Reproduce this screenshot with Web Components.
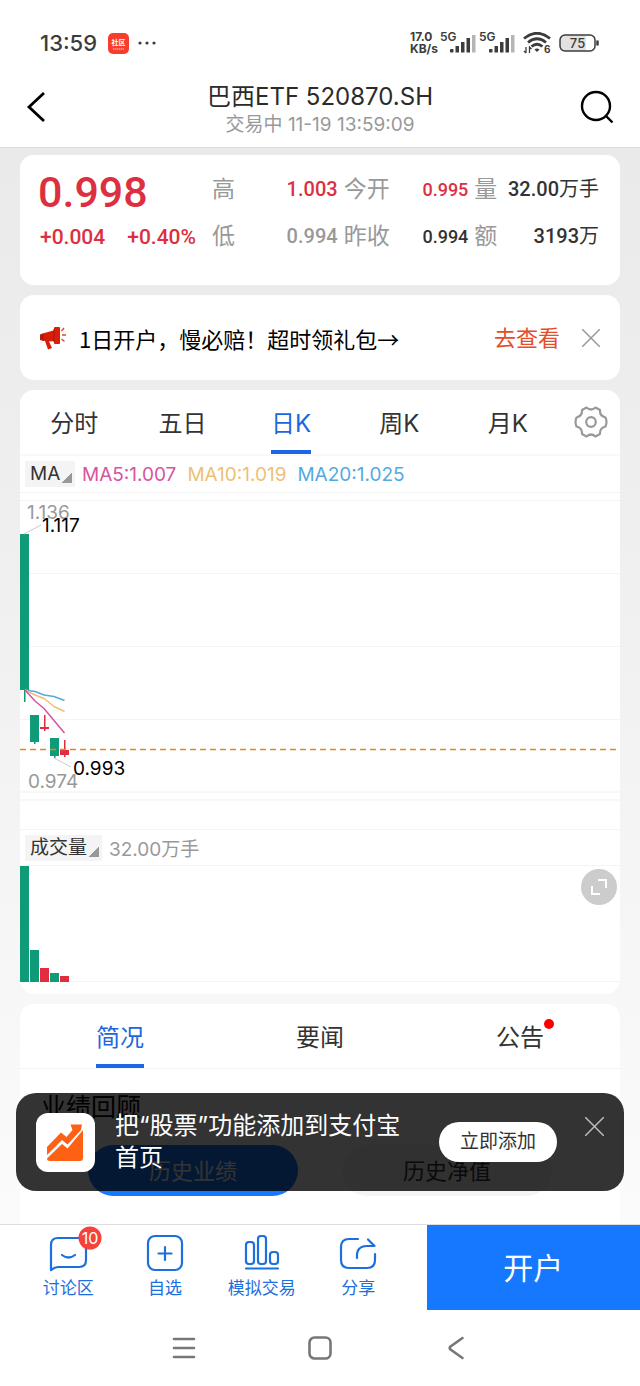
<!DOCTYPE html>
<html lang="zh-CN">
<head>
<meta charset="utf-8">
<meta name="viewport" content="width=device-width, initial-scale=1">
<title>巴西ETF 520870.SH</title>
<style>
  html, body { margin: 0; }
  body {
    font-family: Inter, "Noto Sans CJK SC", sans-serif;
    color: #333;
    --num: Roboto, "Noto Sans CJK SC", sans-serif;
    --up: #dc3040;
    --down: #0f9a78;
    --blue: #1c66e0;
    --line: #f4f4f4;
  }
</style>
</head>
<body>
<stock-app></stock-app>

<script>
const define = (name, css, html) => {
  const tpl = document.createElement('template');
  tpl.innerHTML = `<style>
    *, *::before, *::after { box-sizing: border-box; }
    button { font: inherit; color: inherit; background: none; border: 0; padding: 0; margin: 0; cursor: pointer; }
    svg { display: block; }
    ${css}</style>${html}`;
  customElements.define(name, class extends HTMLElement {
    constructor() {
      super();
      this.attachShadow({ mode: 'open' }).append(tpl.content.cloneNode(true));
    }
  });
};

define('status-bar', `
  :host { display: flex; box-sizing: border-box; align-items: center; height: 66px; padding: 20px 40px 0; font-weight: 500; color: #3c3c3c; }
  .time { font-size: 22px; margin-right: 11px; }
  .app { margin-right: 9px; }
  .sys { margin-left: auto; display: flex; align-items: center; gap: 2px; }
  .speed { font-size: 12px; line-height: 12px; font-weight: 700; }
  .wifi { margin: 0 6px 0 5px; }
`, `
  <span class="time">13:59</span>
  <svg class="app" width="21" height="21" viewBox="0 0 21 21" role="img" aria-label="社区">
    <rect width="21" height="21" rx="5" fill="#f93d2c"/>
    <text x="10.500" y="12" text-anchor="middle" font-size="7" font-weight="700" fill="#fff">社区</text>
    <path d="M5 16h11" stroke="#fff" stroke-width="1" stroke-dasharray="1.500 .5" opacity=".8"/>
  </svg>
  <svg width="18" height="4" viewBox="0 0 18 4" fill="#3c3c3c" aria-hidden="true"><circle cx="2" cy="2" r="1.600"/><circle cx="9" cy="2" r="1.600"/><circle cx="16" cy="2" r="1.600"/></svg>
  <div class="sys">
    <div class="speed">17.0<br>KB/s</div>
    <signal-bars></signal-bars>
    <signal-bars></signal-bars>
    <svg class="wifi" width="28" height="22" viewBox="0 0 28 22" fill="none" stroke="#3c3c3c" stroke-width="2.800">
      <path d="M1 6.500Q14-4 27 6.500M5 10.500Q14 3 23 10.500M8.500 14.500Q14 10 19.500 14.500"/>
      <path d="M11.500 17.500Q14 15.500 16.500 17.500L14 20z" fill="#3c3c3c" stroke="none"/>
      <path d="M3 15v6M1 19l2 2M6.500 21v-6l2 2" stroke-width="1.300"/>
      <text x="21" y="21" font-size="10" font-weight="700" fill="#3c3c3c" stroke="none">6</text>
    </svg>
    <svg width="41" height="18" viewBox="0 0 41 18">
      <path d="M5 1H27V17H5Q1 17 1 13V5Q1 1 5 1z" fill="#e2e2e2"/>
      <rect x="1" y="1" width="35" height="16" rx="5" fill="none" stroke="#3c3c3c" stroke-width="1.500"/>
      <path d="M38.500 6.500v5" stroke="#3c3c3c" stroke-width="2.500"/>
      <text x="18.500" y="13.500" text-anchor="middle" font-size="13" font-weight="500" fill="#3c3c3c">75</text>
    </svg>
  </div>
`);

define('signal-bars', `:host { display: block; }`, `
  <svg width="37" height="22" viewBox="0 0 37 22" fill="#3c3c3c">
    <text x="0" y="9" font-size="12" font-weight="600">5G</text>
    <rect x="10" y="17" width="3.500" height="3.500" rx=".8"/><rect x="15.500" y="14" width="3.500" height="6.500"/>
    <rect x="21" y="10" width="3.500" height="10.500"/><rect x="26.500" y="6" width="3.500" height="14.500"/>
    <rect x="32" y="3" width="3.500" height="17.500" fill="#b5b5b5"/>
  </svg>
`);

define('title-bar', `
  :host { display: flex; box-sizing: border-box; align-items: center; justify-content: space-between; height: 82px; padding: 0 26px; border-bottom: 1px solid #dedede; }
  .mid { text-align: center; padding-top: 6px; }
  h1 { margin: 0; font-size: 24px; line-height: 30px; font-weight: 400; color: #2b2b2b; }
  p { margin: 0; font-size: 19px; line-height: 26px; color: #999; }
`, `
  <button aria-label="返回"><svg width="34" height="32" viewBox="0 0 34 32" fill="none" stroke="#000" stroke-width="2.800"><path d="M18 2L3 16 18 30"/></svg></button>
  <div class="mid"><h1><slot></slot></h1><p><slot name="sub"></slot></p></div>
  <button aria-label="搜索"><svg width="34" height="34" viewBox="0 0 34 34" fill="none" stroke="#000" stroke-width="2.400"><circle cx="16" cy="16" r="14"/><path d="M26 26l6.500 6.500"/></svg></button>
`);

define('quote-card', `
  :host { display: grid; box-sizing: border-box; grid-template-columns: 174px minmax(0, 1fr); height: 130px; padding: 11px 21px 0 18px; border-radius: 14px; background: #fff; font-family: var(--num); }
  .price { font-size: 43px; line-height: 52px; font-weight: 500; color: var(--up); }
  .chg { display: flex; gap: 22px; padding-left: 2px; font-size: 21px; line-height: 38px; font-weight: 500; color: var(--up); }
  dl { margin: 0; display: grid; grid-template-columns: 23px 97fr 46px 73fr 23px 96fr; grid-auto-rows: 47px; column-gap: 6px; line-height: 47px; }
  dt { font-size: 23px; color: #999; }
  dd { margin: 0; font-size: 20px; font-weight: 500; text-align: right; white-space: nowrap; }
  dd span { font-weight: 400; }
  .s { font-size: 18px; } .up { color: var(--up); } .flat { color: #999; }
`, `
  <div><div class="price">0.998</div><div class="chg"><span>+0.004</span><span>+0.40%</span></div></div>
  <dl>
    <dt>高</dt><dd class="up">1.003</dd><dt>今开</dt><dd class="s up">0.995</dd><dt>量</dt><dd>32.00<span>万手</span></dd>
    <dt>低</dt><dd class="flat">0.994</dd><dt>昨收</dt><dd class="s">0.994</dd><dt>额</dt><dd>3193<span>万</span></dd>
  </dl>
`);

define('promo-card', `
  :host { display: flex; box-sizing: border-box; align-items: center; height: 85px; padding: 0 20px; border-radius: 14px; background: #fff; font-size: 22px; line-height: 32px; }
  p { margin: 0 auto 0 13px; color: #000; font-family: "Noto Sans CJK SC", sans-serif; }
  a { color: #e34d2b; text-decoration: none; margin-right: 22px; }
`, `
  <svg width="26" height="26" viewBox="0 0 26 26" aria-hidden="true">
    <path d="M1 9L15 5V16L9 16.500 12 23 8 24.500 5 16 1 15z" fill="#d81e06"/><path d="M0 9.500L4 8.500V16L0 15z" fill="#b31d0a"/>
    <rect x="14" y="2" width="6" height="17" rx="1" fill="#d81e06"/><path d="M14 4v13" stroke="#9f1a0a"/>
    <path d="M21.500 6L24 3M22 10h4M21.500 14l3 2.500" stroke="#d84a35" stroke-width="1.400"/>
  </svg>
  <p><slot></slot></p>
  <a href="#open">去查看</a>
  <button aria-label="关闭"><svg width="18" height="18" viewBox="0 0 18 18" stroke="#999" stroke-width="1.500"><path d="M0 0L18 18M18 0L0 18"/></svg></button>
`);

define('tab-item', `
  :host { display: flex; flex: 1; justify-content: center; font-size: 24px; }
  button { position: relative; height: 100%; padding-top: 3px; border-bottom: 4px solid transparent; }
  :host([active]) button { color: var(--blue); border-color: #1c66e8; }
  i { display: none; position: absolute; top: 15px; right: -10px; width: 10px; height: 10px; border-radius: 50%; background: #f00; }
  :host([dot]) i { display: block; }
`, `<button role="tab"><slot></slot><i></i></button>`);

define('kline-card', `
  :host { display: block; border-radius: 14px; background: #fff; overflow: hidden; }
  .tabs { display: flex; height: 66px; border-bottom: 2px solid #f8f8f8; }
  .set { width: 58px; display: grid; place-items: center; }
  .row { display: flex; align-items: center; height: 37px; padding-left: 5px; gap: 11px; border-bottom: 1px solid var(--line); font-size: 19px; white-space: nowrap; }
  .row.vol { border-top: 1px solid var(--line); gap: 7px; }
  .row select + span { margin-left: -4px; }
  .row.vol select + span { margin-left: 0; }
  select { appearance: none; border: 0; border-radius: 0; margin: 0; height: 26px; padding: 0 14px 0 5px; font: inherit; line-height: 26px; color: #333;
    background: linear-gradient(135deg, transparent 49%, #999 50%) no-repeat right 3px bottom 4px / 10px 10px #f4f4f4; }
  .m5 { color: #d9539f; } .m10 { color: #efbf74; } .m20 { color: #54aae0; } .v { color: #999; }
  svg { width: 100%; }
  .set svg { width: 34px; }
  .volume { position: relative; }
  .zoom { position: absolute; top: 3px; right: 3px; width: 36px; height: 36px; border-radius: 50%; background: #ccc; display: grid; place-items: center; }
  .zoom svg { width: 18px; }
`, `
  <div class="tabs" role="tablist">
    <tab-item>分时</tab-item><tab-item>五日</tab-item><tab-item active>日K</tab-item><tab-item>周K</tab-item><tab-item>月K</tab-item>
    <button class="set" aria-label="设置"><svg height="34" viewBox="0 0 34 34" fill="none" stroke="#999" stroke-width="2.200" stroke-linejoin="round">
      <path d="M12.500 2.500Q17 6.500 21.500 2.500L26 5Q25.500 11 31.500 12.500Q33.500 17 31.500 21.500Q25.500 23 26 29L21.500 31.500Q17 27.500 12.500 31.500L8 29Q8.500 23 2.500 21.500Q.5 17 2.500 12.500Q8.500 11 8 5z"/><circle cx="17" cy="17" r="4.800"/></svg></button>
  </div>
  <div class="row"><select aria-label="主图指标"><option>MA</option></select><span class="m5">MA5:1.007</span><span class="m10">MA10:1.019</span><span class="m20">MA20:1.025</span></div>
  <svg height="336" role="img" aria-label="日K线图" font-size="19">
    <g fill="#f4f4f4"><rect y="7" width="100%" height="1"/><rect y="80" width="100%" height="1"/><rect y="153" width="100%" height="1"/><rect y="226" width="100%" height="1"/></g>
    <g fill="#f8f8f8"><rect y="298" width="100%" height="2"/><rect y="306" width="100%" height="2"/></g>
    <g fill="#0f9a78"><rect y="41" width="9" height="156"/><rect x="4" y="196" width="1.500" height="13"/><rect x="10" y="222" width="9" height="27"/><rect x="14" y="249" width="1.500" height="2"/><rect x="30" y="245" width="9" height="18"/><rect x="34" y="263" width="1.500" height="2"/></g>
    <g fill="#e12d3f"><rect x="24" y="222" width="1.500" height="16"/><rect x="20" y="234" width="9" height="2"/><rect x="44" y="247" width="1.500" height="17"/><rect x="40" y="257" width="9" height="5"/></g>
    <g fill="none" stroke-width="1.500" stroke-linejoin="round"><path d="M5 197l10 1.500 9 3.500 10 1.500 10.500 4" stroke="#54aae0"/><path d="M5 197l10 5 9 3.500 10 8 10.500 5" stroke="#efbf74"/><path d="M5 197l10 11 9 7.500 10 12 10.500 12.500" stroke="#d9539f"/></g>
    <path d="M4 41l17-9M34 265l17 9" stroke="#ccc"/>
    <line y1="256.500" x2="100%" y2="256.500" stroke="#de8a22" stroke-width="1.500" stroke-dasharray="6 4"/>
    <g fill="#999"><text x="7" y="26">1.136</text><text x="8" y="295">0.974</text></g>
    <g fill="#000"><text x="22" y="39">1.117</text><text x="53" y="282">0.993</text></g>
  </svg>
  <div class="row vol"><select aria-label="副图指标"><option>成交量</option></select><span class="v">32.00万手</span></div>
  <div class="volume">
    <svg height="128" role="img" aria-label="成交量图"><rect y="115" width="100%" height="1" fill="#f4f4f4"/>
      <g fill="#0f9a78"><rect width="9" height="116"/><rect x="10" y="84" width="9" height="32"/><rect x="30" y="107" width="9" height="9"/></g>
      <g fill="#e12d3f"><rect x="20" y="102" width="9" height="14"/><rect x="40" y="110" width="9" height="6"/></g></svg>
    <button class="zoom" aria-label="全屏"><svg height="18" viewBox="0 0 18 18" fill="none" stroke="#fff" stroke-width="2"><path d="M8 2h8v8M2 8v8h8"/></svg></button>
  </div>
`);

define('info-card', `
  :host { display: block; flex: 1; border-radius: 14px 14px 0 0; background: #fff; }
  .tabs { display: flex; height: 65px; border-bottom: 1px solid var(--line); }
  h2 { margin: 18px 21px; font-size: 25px; line-height: 40px; font-weight: 400; color: #000; }
  .seg { display: flex; justify-content: center; gap: 44px; }
  .seg button { width: 210px; height: 51px; padding-bottom: 3px; border-radius: 26px; font-size: 22px; background: #f4f4f4; }
  .seg .on { background: #1677ff; color: #fff; }
`, `
  <div class="tabs" role="tablist"><tab-item active>简况</tab-item><tab-item>要闻</tab-item><tab-item dot>公告</tab-item></div>
  <h2>业绩回顾</h2>
  <div class="seg"><button class="on">历史业绩</button><button>历史净值</button></div>
`);

define('add-toast', `
  :host { display: flex; box-sizing: border-box; align-items: center; height: 98px; padding: 0 20px; border-radius: 20px; background: rgba(0,0,0,.8); color: #fff; }
  .logo { flex: none; margin-right: 20px; }
  p { flex: 1; margin: 0 24px 0 0; font-size: 24px; line-height: 32px; }
  .add { flex: none; width: 118px; height: 40px; border-radius: 20px; background: #fff; color: #333; font-size: 19px; line-height: 40px; }
  .x { flex: none; align-self: flex-start; margin: 24px 0 0 28px; }
`, `
  <svg class="logo" width="59" height="59" viewBox="0 0 59 59" aria-hidden="true">
    <rect width="59" height="59" rx="12" fill="#fff"/>
    <path d="M11 34L25 19.500l5.500 4.500 6-7-2-5.500H46L45 17 31.500 31.500 26 27 11 42z" fill="#fe6114"/>
    <path d="M11 45.500L26 31l5.500 4.500L47 17V45q0 3-3 3H14q-3 0-3-2.500z" fill="#fe6114"/>
  </svg>
  <p><slot></slot></p>
  <button class="add">立即添加</button>
  <button class="x" aria-label="关闭"><svg width="19" height="19" viewBox="0 0 19 19" stroke="#bbb" stroke-width="1.500"><path d="M0 0L19 19M19 0L0 19"/></svg></button>
`);

define('tool-item', `
  :host { display: flex; flex: 1; justify-content: center; color: #1c6fdc; }
  a { position: relative; display: flex; flex-direction: column; align-items: center; padding-top: 8px; gap: 3px; color: inherit; text-decoration: none; font-size: 17px; line-height: 24px; white-space: nowrap; }
  ::slotted(svg) { display: block; }
`, `<a href="#tool"><slot name="icon"></slot><slot></slot></a>`);

define('bottom-bar', `
  :host { display: grid; box-sizing: border-box; grid-template-columns: 2fr 1fr; height: 86px; border-top: 1px solid #dedede; background: #fff; }
  nav { display: flex; padding: 0 20px; }
  .cta { background: #1677ff; color: #fff; font-size: 30px; padding-bottom: 4px; }
  tool-item svg { fill: none; stroke: #1c6fdc; stroke-width: 2.200; stroke-linecap: round; stroke-linejoin: round; overflow: visible; }
`, `
  <nav>
    <tool-item><svg slot="icon" width="40" height="40" viewBox="0 0 40 40">
      <path d="M3 37V12q0-7 7-7h21q7 0 7 7v15q0 7-7 7H10q-3 0-7 3z"/><path d="M14 22q6.500 5 13 0"/>
      <circle cx="42" cy="5" r="11.500" fill="#f5423a" stroke="none"/><text x="42" y="11" text-anchor="middle" font-size="16" fill="#fff" stroke="none">10</text></svg>讨论区</tool-item>
    <tool-item><svg slot="icon" width="40" height="40" viewBox="0 0 40 40"><rect x="3" y="3" width="34" height="34" rx="7"/><path d="M20 14v13M13.500 20.500h13"/></svg>自选</tool-item>
    <tool-item><svg slot="icon" width="40" height="40" viewBox="0 0 40 40"><rect x="4" y="9" width="8" height="22" rx="3"/><rect x="16" y="3" width="8" height="28" rx="3"/><rect x="28" y="19" width="8" height="12" rx="3"/><path d="M4 35.500h32"/></svg>模拟交易</tool-item>
    <tool-item><svg slot="icon" width="40" height="40" viewBox="0 0 40 40"><path d="M20 6H11q-8 0-8 8v13q0 8 8 8h18q8 0 8-8v-6"/><path d="M19 25q-1-12 10-12h7.500L30 6.500"/></svg>分享</tool-item>
  </nav>
  <button class="cta">开户</button>
`);

define('system-nav', `
  :host { display: flex; justify-content: center; gap: 112px; align-items: center; height: 76px; background: #fff; }
  svg { fill: none; stroke: #777; stroke-width: 2.600; stroke-linecap: round; stroke-linejoin: round; }
`, `
  <button aria-label="最近任务"><svg width="24" height="24" viewBox="0 0 24 24"><path d="M2 3h20M2 12h20M2 21h20"/></svg></button>
  <button aria-label="主屏幕"><svg width="24" height="24" viewBox="0 0 24 24"><rect x="1.500" y="1.500" width="21" height="21" rx="5"/></svg></button>
  <button aria-label="后退"><svg width="24" height="24" viewBox="0 0 24 24"><path d="M18.500 2L6.500 10.500Q5 12 6.500 13.500L18.500 22"/></svg></button>
`);

define('stock-app', `
  :host { display: flex; flex-direction: column; height: 100vh; background: #fff; }
  main { position: relative; flex: 1; min-height: 0; display: flex; flex-direction: column; gap: 10px; padding: 7px 20px 0; overflow: hidden; background: linear-gradient(#eaeaea, #efefef 35%, #fbfbfb); }
  main > * { flex-shrink: 0; }
  add-toast { position: absolute; left: 16px; right: 16px; bottom: 33px; }
`, `
  <status-bar></status-bar>
  <title-bar>巴西ETF 520870.SH<span slot="sub">交易中 11-19 13:59:09</span></title-bar>
  <main>
    <quote-card></quote-card>
    <promo-card>1日开户，慢必赔！超时领礼包→</promo-card>
    <kline-card></kline-card>
    <info-card></info-card>
    <add-toast>把“股票”功能添加到支付宝首页</add-toast>
  </main>
  <bottom-bar></bottom-bar>
  <system-nav></system-nav>
`);
</script>
</body>
</html>
